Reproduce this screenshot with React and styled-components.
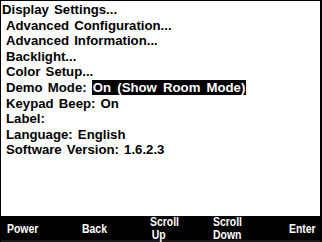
import React from "react";
import styled, { createGlobalStyle } from "styled-components";

const Global = createGlobalStyle`
  html, body { margin: 0; padding: 0; background: #fff; }
  body { width: 322px; height: 242px; overflow: hidden; }
`;

const Screen = styled.div`
  width: 322px;
  height: 242px;
  box-sizing: border-box;
  border-top: 1px solid #000;
  border-left: 1px solid #000;
  border-right: 2px solid #000;
  background: #fff;
  display: flex;
  flex-direction: column;
  font-family: "Liberation Sans", Arial, sans-serif;
`;

const Menu = styled.div`
  flex: 1;
  padding: 1px 0 0 1px;
  display: flex;
  flex-direction: column;
`;

const Row = styled.div`
  font-size: 13.2px;
  font-weight: bold;
  line-height: 15.6px;
  height: 15.6px;
  color: #000;
  white-space: pre;
  word-spacing: 1.5px;
  padding-left: ${(p) => (p.$indent ? "4px" : "0")};
`;

const Highlight = styled.span`
  background: #000;
  color: #fff;
  padding: 0 1px;
  word-spacing: 2.5px;
`;

const SoftKeys = styled.div`
  height: 26px;
  background: #000;
  display: grid;
  grid-template-columns: 75px 68px 63px 76px 1fr;
  align-items: center;
  padding-left: 6px;
  box-shadow: inset 0 -2px 0 #1a1a1a;
`;

const Key = styled.div`
  color: #fff;
  font-family: "Liberation Sans", Arial, sans-serif;
  font-weight: bold;
  font-size: 12px;
  line-height: 13px;
  text-align: left;
  white-space: nowrap;
`;

const KeyLine = styled.span`
  display: block;
  transform: scaleX(0.87);
  transform-origin: left center;
  padding-left: ${(p) => p.$shift || 0}px;
`;

const rows = [
  { t: "Display Settings...", indent: false },
  { t: "Advanced Configuration...", indent: true },
  { t: "Advanced Information...", indent: true },
  { t: "Backlight...", indent: true },
  { t: "Color Setup...", indent: true },
  { t: "Demo Mode:", hl: "On (Show Room Mode)", indent: true },
  { t: "Keypad Beep: On", indent: true },
  { t: "Label:", indent: true },
  { t: "Language: English", indent: true },
  { t: "Software Version: 1.6.2.3", indent: true },
];

const keys = [
  ["Power"],
  ["Back"],
  ["Scroll", "Up"],
  ["Scroll", "Down"],
  ["Enter"],
];

export default function App() {
  return (
    <>
      <Global />
      <Screen>
        <Menu>
          {rows.map((r, i) => (
            <Row key={i} $indent={r.indent}>
              {r.t}
              {r.hl && (
                <>
                  {" "}
                  <Highlight>{r.hl}</Highlight>
                </>
              )}
            </Row>
          ))}
        </Menu>
        <SoftKeys>
          {keys.map((k, i) => (
            <Key key={i}>
              {k.map((line, j) => (
                <KeyLine key={j} $shift={line === "Up" ? 2 : 0}>
                  {line}
                </KeyLine>
              ))}
            </Key>
          ))}
        </SoftKeys>
      </Screen>
    </>
  );
}
